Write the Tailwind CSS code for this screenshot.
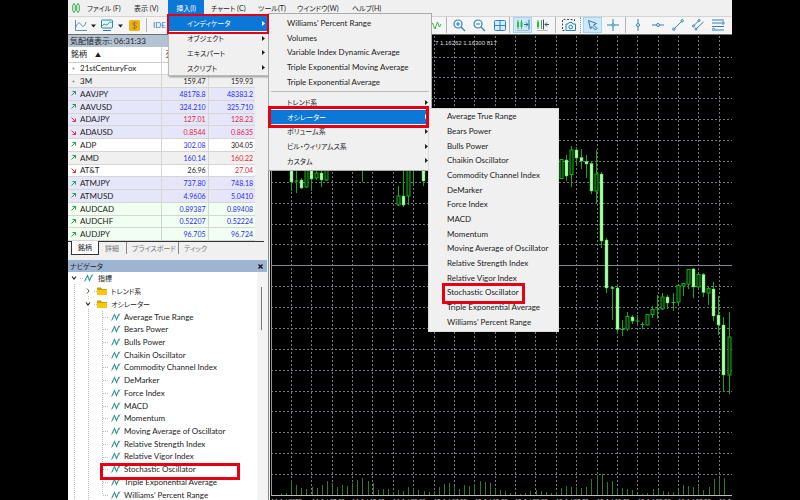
<!DOCTYPE html>
<html lang="ja">
<head>
<meta charset="utf-8">
<title>インディケータ</title>
<script src="https://cdn.jsdelivr.net/npm/@tailwindcss/browser@4"></script>
</head>
<body class="bg-black">
<div class="flex h-screen justify-center overflow-hidden bg-black font-['Lato','Noto_Sans_CJK_JP',sans-serif] text-[8px] leading-[12px] text-[#222] [font-feature-settings:'palt']">
<div class="relative flex w-[83%] flex-col bg-[#f0f0f0]">

  <nav class="flex h-4 shrink-0 items-center bg-[#f0f0f0] pl-1 text-[7px]" aria-label="メニュー">
    <svg class="h-3 w-2" viewBox="0 0 8 12" fill="none" stroke="#2fae4e"><path d="M2 1v10M6 1v10"/><rect x=".7" y="2.5" width="2.6" height="7" rx="1" fill="#f0f0f0"/><rect x="4.7" y="2.5" width="2.6" height="7" rx="1" fill="#f0f0f0"/></svg>
    <button class="ml-[7px] w-[47px] text-left whitespace-nowrap">ファイル (F)</button>
    <button class="w-[34px] text-left whitespace-nowrap">表示 (V)</button>
    <button class="h-full w-9 bg-[#0b78d7] whitespace-nowrap text-white">挿入(I)</button>
    <button class="ml-[7px] w-[47px] text-left whitespace-nowrap">チャート (C)</button>
    <button class="w-[39px] text-left whitespace-nowrap">ツール(T)</button>
    <button class="w-[55px] text-left whitespace-nowrap">ウインドウ(W)</button>
    <button class="text-left whitespace-nowrap">ヘルプ(H)</button>
  </nav>

  <div class="flex h-[19px] shrink-0 items-center border-t border-[#d4d4d4] border-b border-b-[#6b7068] bg-[#f5f5f5] pb-px pl-1.5">
    <button aria-label="ライン"><svg class="h-[15px] w-6" viewBox="0 0 24 15" fill="none"><path d="M1.500 2v10.500H13M2 9C4 4 5.500 4 7 6.500S10 10 12 4" stroke="#5b93b8"/><path d="M17 6.500h5l-2.500 3z" fill="#222"/></svg></button>
    <button class="ml-0.5" aria-label="テンプレート"><svg class="h-[15px] w-6" viewBox="0 0 24 15" fill="none"><rect x="1.500" y="2" width="11" height="8" rx="1" stroke="#2f83b8" fill="#e4f4fb"/><path d="M2 8c3-4 4 1 6-2s3-1 4-2" stroke="#2fa36a"/><path d="M3 12.500h8" stroke="#2f83b8"/><path d="M18 6.500h5l-2.500 3z" fill="#222"/></svg></button>
    <button class="ml-[5px]" aria-label="取引"><svg class="h-[13px] w-[11px]" viewBox="0 0 11 13"><rect x="0" y="1" width="11" height="11" rx="1.500" fill="#eeb311"/><path d="M7.800 4.300C5.500 3 3.500 3.600 3.500 5s4.200 1 4.200 2.800S5 9.800 3.200 8.700M5.600 2.500v8" stroke="#a8741a" fill="none"/></svg></button>
    <span class="mx-1.5 h-3.5 w-px bg-[#b5b5b5]"></span>
    <button class="text-[#2d7db5]">IDE</button>
    <div class="ml-auto flex items-center">
      <svg class="h-[15px] w-3" viewBox="0 0 12 15" fill="none"><path d="M0 9l2.500-4 2.500 6 2.500-7 2 5 1.500-3" stroke="#39b54a"/></svg>
      <span class="ml-1 h-4 w-px bg-[#b5b5b5]"></span>
      <button class="ml-1.5" aria-label="拡大"><svg class="h-[13px] w-[13px]" viewBox="0 0 13 13" fill="none" stroke="#2f83c4" stroke-width="1.200"><circle cx="5" cy="5" r="4"/><path d="M8 8l4 4M3 5h4M5 3v4"/></svg></button>
      <button class="ml-[7px]" aria-label="縮小"><svg class="h-[13px] w-[13px]" viewBox="0 0 13 13" fill="none" stroke="#2f83c4" stroke-width="1.200"><circle cx="5" cy="5" r="4"/><path d="M8 8l4 4M3 5h4"/></svg></button>
      <button class="ml-2" aria-label="整列"><svg class="h-[13px] w-3" viewBox="0 0 12 13" fill="#d9eefb" stroke="#2f83c4"><rect x=".5" y="1.500" width="11" height="10" rx="1"/><path d="M6 1.500v10M.5 6.500h11"/></svg></button>
      <span class="mx-[3px] h-4 w-px bg-[#b5b5b5]"></span>
      <button class="h-4 w-[19px] border border-[#a5d3f2] bg-[#cde8fb] pl-[2px]" aria-label="自動スクロール"><svg class="h-3.5 w-3.5" viewBox="0 0 14 14" fill="none"><path d="M2 2v9M5.500 2v9" stroke="#39b54a"/><path d="M1 4h2v5H1zM4.500 4h2v5h-2z" fill="#39b54a"/><path d="M8 6.500h4M10 4.500l2 2-2 2M13 1.500v10" stroke="#237a8f"/><path d="M1 12.500h12" stroke="#a9bac4"/></svg></button>
      <button class="ml-1" aria-label="チャートシフト"><svg class="h-3.5 w-3.5" viewBox="0 0 14 14" fill="none"><path d="M2 2v9M5.500 2v9" stroke="#39b54a"/><path d="M1 4h2v5H1z" fill="#39b54a"/><path d="M7.500 1.500v10M13 6.500H9M11 4.500l-2 2 2 2" stroke="#34556b"/><path d="M1 12.500h11" stroke="#bbb"/></svg></button>
      <span class="mx-[5px] h-4 w-px bg-[#b5b5b5]"></span>
      <button aria-label="スクリーンショット"><svg class="h-3.5 w-4" viewBox="0 0 16 14" fill="none" stroke="#2f83b8"><path d="M3.500 12.500H1.500v-11h12v3" stroke="#445" stroke-dasharray="2 1.500"/><path d="M5 6h2l1-1.500h3L12 6h2.500v6.500H5z" fill="#e9f6fd"/><circle cx="9.700" cy="9" r="1.800"/></svg></button>
      <span class="mr-0.5 ml-[3px] h-4 border-l border-dotted border-[#999]"></span>
      <button class="h-4 w-[19px] border border-[#a5d3f2] bg-[#cde8fb] pl-[3px]" aria-label="カーソル"><svg class="h-3.5 w-3" viewBox="0 0 12 14" fill="none" stroke="#2f77a8"><path d="M1.500 2.500l8 3-3 1.500 3.500 3.500-1.500 1.500L5 8.500 3.500 11z"/></svg></button>
      <button class="ml-[5px]" aria-label="クロスヘア"><svg class="h-3 w-3" viewBox="0 0 12 12" fill="none" stroke="#2f83b8"><path d="M6 0v4.500M6 7.500V12M0 6h4.500M7.500 6H12"/><circle cx="6" cy="6" r="1.300"/></svg></button>
      <span class="mx-1.5 h-4 w-px bg-[#b5b5b5]"></span>
      <button aria-label="垂直線"><svg class="h-3 w-3" viewBox="0 0 12 12" fill="none" stroke="#2f83b8"><path d="M6 0v4M6 8v4"/><circle cx="6" cy="6" r="1.500"/></svg></button>
      <button class="ml-2" aria-label="水平線"><svg class="h-3 w-3" viewBox="0 0 12 12" fill="none" stroke="#2f83b8"><path d="M0 6h4M8 6h4"/><circle cx="6" cy="6" r="1.500"/></svg></button>
      <button class="ml-2" aria-label="トレンドライン"><svg class="h-3 w-3" viewBox="0 0 12 12" fill="none" stroke="#2f83b8"><path d="M2.500 9.500l7-7"/><circle cx="1.800" cy="10.200" r="1.200"/><circle cx="10.200" cy="1.800" r="1.200"/></svg></button>
      <button class="ml-2" aria-label="チャネル"><svg class="h-3 w-3" viewBox="0 0 12 12" fill="none" stroke="#2f83b8"><path d="M2 6.500l4.500-4.500M4.500 9.500L11.500 3"/><circle cx="1.500" cy="7" r="1"/><circle cx="7" cy="1.500" r="1"/><circle cx="4" cy="10" r="1"/></svg></button>
      <button class="mr-[7px] ml-2" aria-label="フィボナッチ"><svg class="h-3 w-[13px]" viewBox="0 0 13 12" fill="none" stroke="#2f83b8"><path d="M0 1h12M0 4h9M0 7.500h12M3 11h9"/><circle cx="11" cy="4" r="1.200"/><circle cx="1.500" cy="10.500" r="1.200"/></svg></button>
    </div>
  </div>

  <div class="flex min-h-0 grow">
    <aside class="flex w-[201px] shrink-0 flex-col overflow-hidden border-r border-[#8a8a8a]">
      <h2 class="h-3 w-[199px] shrink-0 bg-[#b3c3d4] pl-0.5 whitespace-nowrap">気配値表示: 06:31:33</h2>
      <table class="h-[194px] w-[187px] shrink-0 table-fixed border-collapse bg-white">
        <colgroup><col class="w-3"><col class="w-[81px]"><col class="w-[47px]"><col class="w-[47px]"></colgroup>
        <thead><tr class="h-[15px] border-b border-[#ccc]"><th colspan="2" class="p-0 pl-[3px] text-left font-normal">銘柄<span class="pl-2 text-[6px]">▲</span></th><th class="border-l border-[#d5d5d5] p-0 pl-1 text-left font-normal">売値</th><th class="border-l border-[#d5d5d5] p-0 pl-1 text-left font-normal">買値</th></tr></thead>
        <tbody id="quotes"></tbody>
      </table>
      <div class="mr-1 flex h-[13px] shrink-0 items-center border-t border-[#333] pl-[3px] text-[7px] text-[#777]" role="tablist">
        <button role="tab" aria-selected="true" class="-mt-px h-[14px] w-7 border border-t-0 border-[#333] bg-white text-[#222]">銘柄</button>
        <button role="tab" class="ml-1.5 h-3 w-[22px] border-r border-[#888] text-left whitespace-nowrap">詳細</button>
        <button role="tab" class="ml-[5px] h-3 w-[47px] border-r border-[#888] text-left whitespace-nowrap">プライスボード</button>
        <button role="tab" class="ml-[5px] h-3 text-left whitespace-nowrap">ティック</button>
      </div>
      <div class="mt-1.5 flex h-3 w-[199px] shrink-0 items-center justify-between bg-[#9db5d3] pr-1 pl-0.5 text-[7px]"><h2>ナビゲータ</h2><button aria-label="閉じる"><svg class="h-[5px] w-[5px]" viewBox="0 0 5 5"><path d="M.5 .5l4 4M4.500 .5l-4 4" stroke="#111" stroke-width="1.300"/></svg></button></div>
      <div class="flex shrink-0">
        <ul id="tree" class="relative grid h-[229px] w-[189px] grid-rows-[repeat(18,1fr)] bg-white"></ul>
        <div class="w-2.5 bg-[#f3f3f3] pt-[15px] pl-1"><div class="h-[43px] w-px bg-[#777]"></div></div>
      </div>
    </aside>

    <main class="ml-px min-w-0 grow overflow-hidden bg-black">
      <svg id="chart" class="h-full w-full" viewBox="270 35 462 465" preserveAspectRatio="xMinYMin slice" role="img" aria-label="チャート"></svg>
    </main>
  </div>

  <div class="absolute top-[15px] left-[100px] w-[101px] border border-[#bbb] bg-[#f0f0f0] text-[7px] shadow-[1px_1px_2px_#0006]" role="menu">
    <ul id="menu1" class="grid h-[59px] grid-rows-4"></ul>
  </div>
  <div class="absolute top-[13px] left-[200px] w-[164px] border border-[#aaa] bg-[#f0f0f0] py-[2px]" role="menu">
    <ul id="menu2a" class="grid h-[73px] grid-rows-5"></ul>
    <hr class="mx-0.5 my-[2px] border-[#bbb]">
    <ul id="menu2b" class="mt-[3px] grid h-[73px] grid-rows-5 text-[7px]"></ul>
  </div>
  <div class="absolute top-[108px] left-[360px] w-[131px] border border-[#ddd] bg-[#f0f0f0] pb-[2px]" role="menu">
    <ul id="menu3" class="grid h-[220px] grid-rows-[repeat(15,1fr)]"></ul>
  </div>

  <div class="pointer-events-none absolute top-[14px] left-[99px] h-5 w-[102px] border-2 border-[#e60012]"></div>
  <div class="pointer-events-none absolute top-[106px] left-[200px] h-[22px] w-[161px] border-[3px] border-[#e60012]"></div>
  <div class="pointer-events-none absolute top-[283px] left-[374px] h-[21px] w-[83px] border-[3px] border-[#e60012]"></div>
  <div class="pointer-events-none absolute top-[463px] left-[32px] h-[17px] w-[140px] border-[3px] border-[#e60012]"></div>
</div>
</div>

<script>
const put = (id, html) => document.getElementById(id).innerHTML = html;
const osc = ["Average True Range","Bears Power","Bulls Power","Chaikin Oscillator","Commodity Channel Index","DeMarker","Force Index","MACD","Momentum","Moving Average of Oscillator","Relative Strength Index","Relative Vigor Index","Stochastic Oscillator","Triple Exponential Average","Williams' Percent Range"];
const arrow = '<svg class="h-[5px] w-[3px]" viewBox="0 0 3 5"><path d="M0 0l3 2.500L0 5z" fill="currentColor"/></svg>';
const item = (t, sub, on) => `<li class="flex min-h-0"><button role="menuitem" class="${on ? 'flex w-full items-center justify-between bg-[#0b78d7] pr-[3px] pl-[18px] whitespace-nowrap text-white' : 'flex w-full items-center justify-between pr-[3px] pl-[18px] whitespace-nowrap'}">${t}${sub ? arrow : ''}</button></li>`;
put('menu1', ["インディケータ","オブジェクト","エキスパート","スクリプト"].map((t, i) => item(t, 1, i == 0)).join(''));
put('menu2a', ["Williams' Percent Range","Volumes","Variable Index Dynamic Average","Triple Exponential Moving Average","Triple Exponential Average"].map(t => item(t)).join(''));
put('menu2b', ["トレンド系","オシレーター","ボリューム系","ビル・ウィリアムス系","カスタム"].map((t, i) => item(t, 1, i == 1)).join(''));
put('menu3', osc.map(t => item(t)).join(''));

const B = 'text-[#2a2af0]', R = 'text-[#e8203a]', K = 'text-[#222]';
const W = 'bg-white', G = 'bg-[#f0f0f0]', V = 'bg-[#e6e6fa]', N = 'bg-[#f0fff0]';
const rows = [["21stCenturyFox","","",0,W,K,K],["3M","159.47","159.93",0,G,K,K],["AAVJPY","48178.8","48383.2",1,V,B,B],["AAVUSD","324.210","325.710",1,V,B,B],["ADAJPY","127.01","128.23",-1,V,R,R],["ADAUSD","0.8544","0.8635",-1,V,R,R],["ADP","302.08","304.05",1,W,B,K],["AMD","160.14","160.22",1,G,B,R],["AT&amp;T","26.96","27.04",-1,W,K,R],["ATMJPY","737.80","748.18",1,V,B,B],["ATMUSD","4.9606","5.0410",1,V,B,B],["AUDCAD","0.89387","0.89408",1,N,B,B],["AUDCHF","0.52207","0.52224",1,N,B,B],["AUDJPY","96.705","96.724",1,N,B,B]];
const mark = d => d == 0 ? '<circle cx="2.500" cy="2.500" r="1" fill="#888"/>' : d > 0 ? '<path d="M.5 4.500l4-4M1.500 .5h3v3" fill="none" stroke="#2a9d4a"/>' : '<path d="M.5 .5l4 4M4.500 1.500v3h-3" fill="none" stroke="#e0303a"/>';
put('quotes', rows.map(([n,b,a,d,bg,cb,ca]) => `<tr class="border-b border-[#d5d5d5] ${bg} leading-[10px]"><td class="p-0 pl-[3px]"><svg class="h-[5px] w-[5px]" viewBox="0 0 5 5">${mark(d)}</svg></td><td class="p-0">${n}</td><td class="border-l border-[#d5d5d5] p-0 pr-0.5 text-right text-[7px] ${cb}">${b}</td><td class="border-l border-[#d5d5d5] p-0 pr-0.5 text-right text-[7px] ${ca}">${a}</td></tr>`).join(''));

const wave = '<svg class="h-2 w-2.5 shrink-0" viewBox="0 0 10 8"><path d="M1 6.500L3.500 1.500 5.500 6.500 8 1" fill="none" stroke="#2f9a8a" stroke-width="1.100"/><path d="M.5 7.500l1.500-2M7.500 3l1.500-2.500" stroke="#5b93d0"/></svg>';
const folder = '<svg class="h-2.5 w-2.5 shrink-0" viewBox="0 0 10 10"><path d="M0 1.500h4l1 1.500h5v6H0z" fill="#d99a00"/><path d="M0 4h10v5H0z" fill="#fdc50c"/></svg>';
const open = '<svg class="h-1.5 w-1.5 shrink-0" viewBox="0 0 6 6"><path d="M1 1.500l2 2.500 2-2.500" fill="none" stroke="#222" stroke-width="1.200"/></svg>';
const shut = '<svg class="h-1.5 w-1.5 shrink-0" viewBox="0 0 6 6"><path d="M2 .5l2 2.500-2 2.500" fill="none" stroke="#555"/></svg>';
const lines = '<li class="pointer-events-none absolute inset-0" aria-hidden="true"><svg class="h-full w-full" fill="none" stroke="#bbb" stroke-dasharray="1 1"><path d="M6.500 12v217M20.500 24v4M20.500 37v192M34.500 39v184M12 6.500h3M26 19.500h3M26 32.500h3"/><path d="M35 45.500h5M35 57.500h5M35 70.500h5M35 83.500h5M35 95.500h5M35 108.500h5M35 121.500h5M35 134.500h5M35 146.500h5M35 159.500h5M35 172.500h5M35 185.500h5M35 197.500h5M35 210.500h5M35 223.500h5"/></svg></li>';
put('tree', `<li class="flex min-h-0 items-center pl-[3px] text-[7px]">${open}<span class="w-[7px]"></span>${wave}<span class="pl-1">指標</span></li>
<li class="flex min-h-0 items-center pl-[17px] text-[7px]">${shut}<span class="w-1.5"></span>${folder}<span class="pl-1">トレンド系</span></li>
<li class="flex min-h-0 items-center pl-[17px] text-[7px]">${open}<span class="w-1.5"></span>${folder}<span class="pl-1">オシレーター</span></li>`
+ osc.map(t => `<li class="flex min-h-0 items-center pl-[43px]">${wave}<span class="pl-[3px] whitespace-nowrap">${t}</span></li>`).join('') + lines);

// Chart: grid, bid line, candles [x, high, low, top, bottom, filled], volumes, time axis
let s = '<g stroke="#747a84" stroke-dasharray="2 2">';
for (let i = 0; i < 22; i++) { const x = Math.round(291 + i * 20.37) + .5; s += `<path d="M${x} 36V495"/>`; }
for (let k = 0; k < 21; k++) { if (k == 10) continue; const y = Math.floor(57 + k * 20.88) + .5; s += `<path d="M271 ${y}H732"/>`; }
s += '</g><path d="M271 265.500H732" stroke="#7d8494"/><path d="M271.500 36V495" stroke="#999"/>';
const c = [[291,160,191,165,182,1],[296,165,193,181,181,1],[301,178,189,180,188,1],[306,165,188,168,187,0],[311,165,191,168,179,1],[316,171,180,173,178,0],[321,168,187,173,180,1],[326,165,181,168,180,0],[362,165,182,165,166,1],[398,186,206,196,205,0],[403,165,207,196,205,1],[408,165,205,170,196,0],[413,165,186,165,166,1],[423,165,186,165,181,1],
[561,159,179,159.500,178.500,0],[566,155,181,160,176,1],[571,146,187,150,174.500,0],[576,147,166,150,158,1],[581,149,169,157.500,161,1],[586,155,178,161.500,164,1],[591,162,194,163.500,191,1],[596,150,204,174,191,0],[601,172,248,174,241,1],[606,238,293,240,288,1],[612,287,320,287.500,288.500,1],[617,285,334,288,329.500,1],[622,320,336,329.500,329.500,1],[627,312,331,316.500,329,0],[632,315,324,317,321,1],[637,315,324,321,321,1],[642,322,329,324.500,324.500,1],[647,314,325,314.500,325,0],[652,306,318,309.500,314.500,0],[657,295,319,309,309,1],[662,293,310,297,309,0],[667,295,309,297,303,1],[673,293,311,302.500,302.500,1],[678,284,304,285.500,302,0],[683,283,296,283.500,286,0],[688,269,289,269.500,284,0],[693,268,298,269,287,1],[698,273,289,274.500,287,0],[703,273,297,274.500,292.500,1],[708,286,305,288.500,293,0],[713,282,321,289,316,1],[718,296,335,315,325,1],[723,317,392,325,375,1],[729,312,394,337,375,0]];
for (const [x,h,l,t,b,f] of c) {
  s += `<path d="M${x+.5} ${h}V${l}" stroke="#16a816"/>`;
  s += b - t < .1 ? `<path d="M${x-1.500} ${t}h4" stroke="#1fc01f"/>` : f ? `<rect x="${x-1}" y="${t}" width="3" height="${b-t}" fill="#b4ffb4" stroke="#3fd03f" stroke-width=".5"/>` : `<rect x="${x-1}" y="${t}" width="3" height="${b-t}" fill="#022002" stroke="#16b016"/>`;
}
const v = [1,2,15,10,7,6,8,7,10,14,12,8,10,9,12,15,17,14,12,5,6,6,3,5,4,8,7,5,4,3,4,8,11,12,9,6,10,9,11,14,13,12,6,5,4,2,1,1,2,4,5,4,3,2,3,7,9,8,8,7,8,16,20,21,13,14,7,7,6,5,1,1,2,6,5,4,3,3,5,10,9,8,9,5,8,16,17,17];
s += '<g stroke="#2c7a2c">' + v.map((n, i) => { const x = Math.round(281 + i * 5.09) + .5; return `<path d="M${x} ${495-n}V495"/>`; }).join('') + '</g>';
s += '<path d="M271 495.500H732" stroke="#bbb"/><g fill="#ddd" font-family="Liberation Sans, sans-serif" font-size="6"><text x="435" y="45">7 1.16262 1.16300  817</text>';
["14 Jul 2025","14 Jul 07:00","14 Jul 15:00","14 Jul 23:00","15 Jul 07:00","15 Jul 15:00","15 Jul 23:00","15 Jul 07:00","15 Jul 15:00","15 Jul 23:00","16 Jul 07:00","16 Jul 15:00"].forEach((t, i) => { s += `<text x="${Math.round(271 + i * 40.74)}" y="503">${t}</text>`; });
put('chart', s + '</g>');
</script>
</body>
</html>
